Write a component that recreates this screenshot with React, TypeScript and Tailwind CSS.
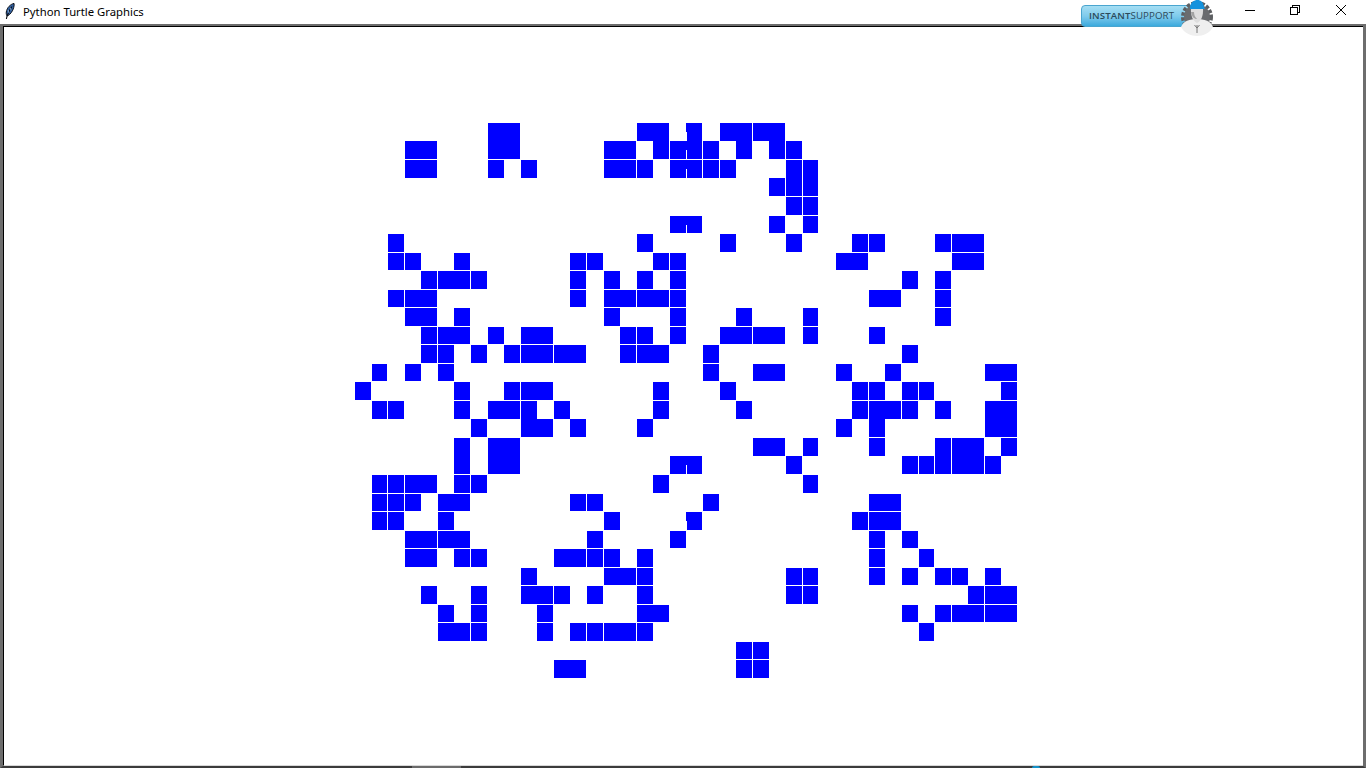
import React from 'react';

// pixel ranges of the turtle grid, measured off the reference
const colX: [number, number][] = [
  [355, 371], [372, 387], [388, 404], [405, 421], [421, 437], [438, 454], [454, 470], [471, 487],
  [488, 504], [504, 520], [521, 537], [537, 553], [554, 570], [570, 586], [587, 603], [604, 620],
  [620, 636], [637, 653], [653, 669], [670, 686], [687, 702], [703, 719], [720, 736], [736, 752],
  [753, 769], [769, 785], [786, 802], [803, 818], [819, 835], [836, 852], [852, 868], [869, 885],
  [885, 901], [902, 918], [919, 934], [935, 951], [952, 968], [968, 984], [985, 1001], [1001, 1017],
];

const rowY: [number, number][] = [
  [123, 141], [141, 159], [160, 178], [178, 196], [197, 215], [216, 233], [234, 252], [253, 270],
  [271, 289], [290, 307], [308, 326], [327, 344], [345, 363], [364, 381], [382, 400], [401, 419],
  [419, 437], [438, 456], [456, 474], [475, 493], [494, 511], [512, 530], [531, 548], [549, 567],
  [568, 585], [586, 604], [605, 622], [623, 641], [642, 659], [660, 678],
];

const rows: number[][] = [
  [8, 9, 17, 18, 20, 22, 23, 24, 25],
  [3, 4, 8, 9, 15, 16, 18, 19, 20, 21, 23, 25, 26],
  [3, 4, 8, 10, 15, 16, 17, 19, 20, 21, 22, 26, 27],
  [25, 26, 27],
  [26, 27],
  [19, 20, 25, 27],
  [2, 17, 22, 26, 30, 31, 35, 36, 37],
  [2, 3, 6, 13, 14, 18, 19, 29, 30, 36, 37],
  [4, 5, 6, 7, 13, 15, 17, 19, 33, 35],
  [2, 3, 4, 13, 15, 16, 17, 18, 19, 31, 32, 35],
  [3, 4, 6, 15, 19, 23, 27, 35],
  [4, 5, 6, 8, 10, 11, 16, 17, 19, 22, 23, 24, 25, 27, 31],
  [4, 5, 7, 9, 10, 11, 12, 13, 16, 17, 18, 21, 33],
  [1, 3, 5, 21, 24, 25, 29, 32, 38, 39],
  [0, 6, 9, 10, 11, 18, 22, 30, 31, 33, 34, 39],
  [1, 2, 6, 8, 9, 10, 12, 18, 23, 30, 31, 32, 33, 35, 38, 39],
  [7, 10, 11, 13, 17, 29, 31, 38, 39],
  [6, 8, 9, 24, 25, 27, 31, 35, 36, 37, 39],
  [6, 8, 9, 19, 20, 26, 33, 34, 35, 36, 37, 38],
  [1, 2, 3, 4, 6, 7, 18, 27],
  [1, 2, 3, 5, 6, 13, 14, 21, 31, 32],
  [1, 2, 5, 15, 20, 30, 31, 32],
  [3, 4, 5, 6, 14, 19, 31, 33],
  [3, 4, 6, 7, 12, 13, 14, 15, 17, 31, 34],
  [10, 15, 16, 17, 26, 27, 31, 33, 35, 36, 38],
  [4, 7, 10, 11, 12, 14, 17, 26, 27, 37, 38, 39],
  [5, 7, 11, 17, 18, 33, 35, 36, 37, 38, 39],
  [5, 6, 7, 11, 13, 14, 15, 16, 17, 34],
  [23, 24],
  [12, 13, 23, 24],
];

const TurtleCells = () => (
  <svg width={1366} height={768} className="absolute left-0 top-0" shapeRendering="crispEdges">
    {rows.map((cols, r) =>
      cols.map((c) => {
        const [x0, x1] = colX[c];
        const [y0, y1] = rowY[r];
        return (
          <g key={`${r}-${c}`} fill="#0000ff">
            <rect x={x0} y={y0} width={x1 - x0} height={y1 - y0} />
            {/* column 20 leans one pixel left over its top half */}
            {c === 20 && <rect x={686} y={y0} width={1} height={9} />}
          </g>
        );
      })
    )}
  </svg>
);

const Feather = () => (
  <svg width={12} height={18} viewBox="0 0 12 18" className="ml-[4px]">
    <path d="M10 0.4 C6.5 1.2 3 4.5 2.3 9 C2.1 10.8 2.4 12.2 3.2 13 C6.3 11.8 8.8 8 9.7 4.6 C10.1 3 10.3 1.5 10 0.4 Z" fill="#2f5f9f" stroke="#0a0f18" strokeWidth={1} />
    <path d="M8 3.5 C6 6 4.4 9.5 3 13.2 L2.4 16" fill="none" stroke="#070a10" strokeWidth={1.1} />
    <path d="M4.2 7 L4.8 10 M6.4 5 L6.9 7.4" stroke="#a9c6e8" strokeWidth={0.7} />
  </svg>
);

const InstantSupport = () => (
  <div className="absolute left-[1081px] top-0 h-[38px] w-[134px]">
    <div className="absolute left-0 top-[5px] flex h-[22px] w-[112px] items-center rounded-[4px] border border-[#4aa5cf] bg-gradient-to-b from-[#a5def3] via-[#7fcbec] to-[#3aaadd] pl-[7px]">
      <span className="text-[9.7px] leading-none tracking-[0.1px] text-[#2c4a5a] [font-family:'Open_Sans',sans-serif]">
        <span className="font-semibold">INSTANT</span>SUPPORT
      </span>
    </div>
    <svg width={38} height={38} viewBox="0 0 38 38" className="absolute left-[97px] top-0">
      <circle cx={19} cy={17} r={14} fill="none" stroke="#5d5f62" strokeWidth={4} strokeDasharray="3.4 1.6" />
      <circle cx={19} cy={17} r={13} fill="#6a6c6f" />
      <path d="M3 27 C5 21 12 19 19 19 C26 19 33 21 35 27 C32 33 25 36 19 36 C13 36 6 33 3 27 Z" fill="#efefef" />
      <path d="M13 8 L25 8 C25.5 15 23.5 21 19 23 C14.5 21 12.5 15 13 8 Z" fill="#dedede" />
      <path d="M13 12 C14 17 16 19 19 19 C17 17 16 15 16 12 Z" fill="#a2a2a2" />
      <path d="M12 7 C12.5 2.5 16 0 19.5 0 C23 0 25.5 2.5 26 7 L27 9 L12 9 Z" fill="#1592dd" />
      <path d="M19 25 L19 33 M21.5 25 L19 28 M16.5 25 L19 28" stroke="#777" strokeWidth={1} fill="none" />
    </svg>
  </div>
);

const WindowControls = () => (
  <div className="flex h-full items-center">
    <div className="flex w-[46px] justify-center pl-[2px]">
      <svg width={10} height={10} viewBox="0 0 10 10" shapeRendering="crispEdges">
        <path d="M0 5.5 H10" stroke="#000" strokeWidth={1} />
      </svg>
    </div>
    <div className="flex w-[46px] justify-center">
      <svg width={10} height={10} viewBox="0 0 10 10" fill="none" stroke="#000" strokeWidth={1} shapeRendering="crispEdges">
        <rect x={0.5} y={2.5} width={7} height={7} />
        <path d="M2.5 2.5 V0.5 H9.5 V7.5 H7.5" />
      </svg>
    </div>
    <div className="flex w-[46px] justify-center">
      <svg width={10} height={10} viewBox="0 0 10 10" fill="none" stroke="#000" strokeWidth={1}>
        <path d="M0 0 L10 10 M10 0 L0 10" />
      </svg>
    </div>
  </div>
);

export default function App() {
  return (
    <div className="relative flex h-[768px] w-[1366px] flex-col overflow-hidden bg-white [font-family:'Open_Sans',sans-serif]">
      <div className="flex h-[24px] shrink-0 items-center justify-between bg-white">
        <div className="flex items-center">
          <Feather />
          <span className="ml-[7px] text-[11.3px] text-[#000] [font-family:'Noto_Sans',sans-serif]">Python Turtle Graphics</span>
        </div>
        <div className="mr-[2px] h-[20px] self-start">
          <WindowControls />
        </div>
      </div>
      <div className="flex-1 border-l-[3px] border-r-[3px] border-t-[2px] border-b-[2px] border-l-[#6d6d6d] border-r-[#6d6d6d] border-t-[#6d6d6d] border-b-[#3c3c3c]">
        <div className="h-full border-l border-t border-l-black border-t-black border-b border-b-[#d8d8d8] bg-white" />
      </div>
      <div className="absolute bottom-0 left-[412px] h-[2px] w-[49px] bg-[#6b6b6b]" />
      <div className="absolute bottom-0 left-[1032px] h-[2px] w-[8px] rounded-t-full bg-[#1592c9]" />
      <TurtleCells />
      <InstantSupport />
    </div>
  );
}
